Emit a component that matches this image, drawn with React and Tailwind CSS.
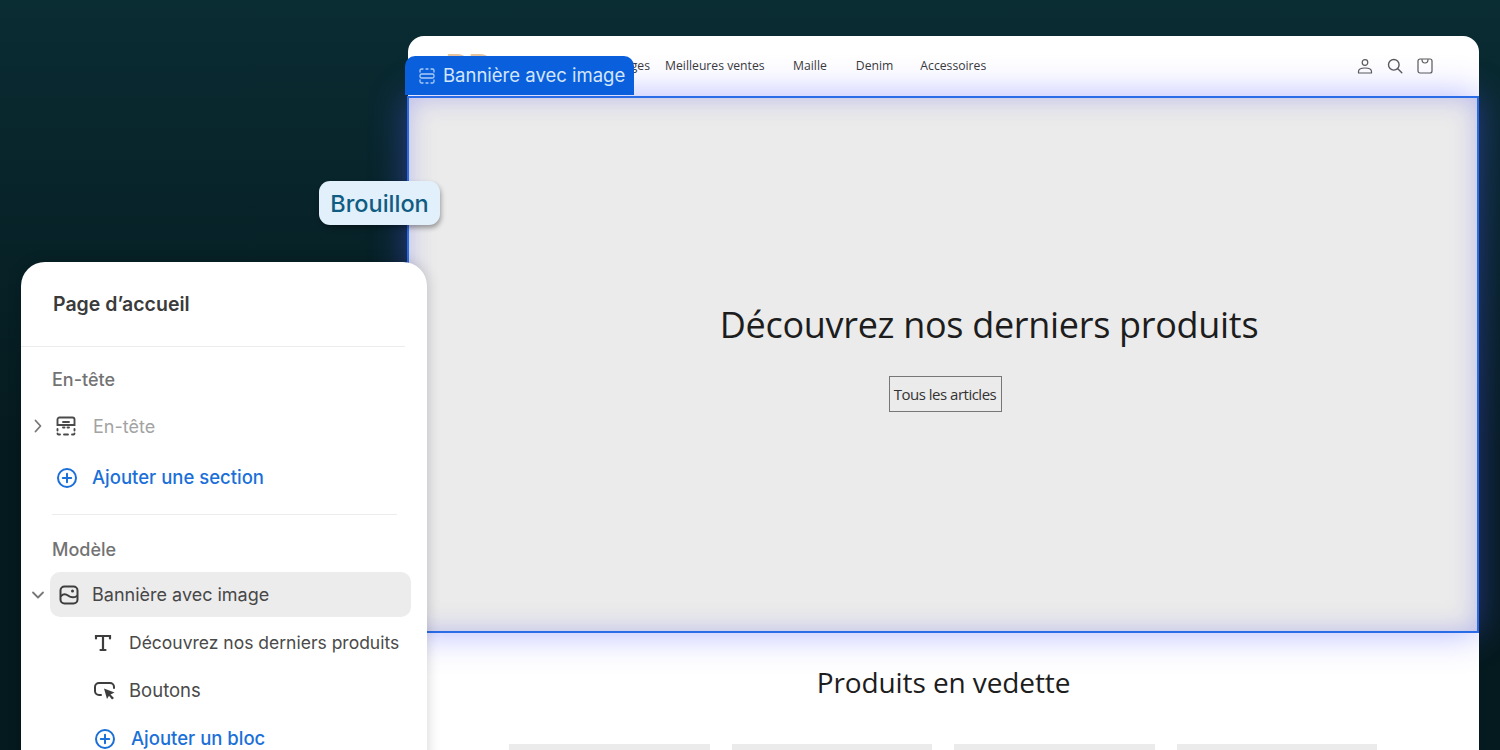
import React from "react";

const Chevron = ({ down }) => (
  <svg width="14" height="14" viewBox="0 0 14 14" fill="none" stroke="#777" strokeWidth="1.8" strokeLinecap="round" strokeLinejoin="round">
    <path d={down ? "M2 4.5 7 9.5 12 4.5" : "M4.5 1.5 9.5 7 4.5 12.5"} />
  </svg>
);

const PlusCircle = () => (
  <svg width="22" height="22" viewBox="0 0 22 22" fill="none" stroke="#1a6fd8" strokeWidth="2" strokeLinecap="round">
    <circle cx="11" cy="11" r="9" />
    <path d="M11 6.8v8.4M6.8 11h8.4" />
  </svg>
);

const HeaderIcon = () => (
  <svg width="20" height="20" viewBox="0 0 20 20" fill="none" stroke="#4a4a4a" strokeWidth="1.9" strokeLinecap="round">
    <path d="M1.5 9V3.5a2 2 0 0 1 2-2h13a2 2 0 0 1 2 2V9z" />
    <path d="M7 6h6" />
    <path d="M1.5 13v1.5M18.5 13v1.5M1.5 17.5a1 1 0 0 0 1 1h1.5M18.5 17.5a1 1 0 0 1-1 1H16M8 18.5h4M7 11.5h1.5M11.5 11.5H13" />
  </svg>
);

const SectionIcon = () => (
  <svg width="16" height="16" viewBox="0 0 16 16" fill="none" stroke="#a9cdf6" strokeWidth="1.3" strokeLinecap="round">
    <path d="M1 4V2.500A1.500 1.500 0 0 1 2.500 1H4M7 1h2M12 1h1.500A1.500 1.500 0 0 1 15 2.500V4" />
    <path d="M1 12v1.500A1.500 1.500 0 0 0 2.500 15H4M7 15h2M12 15h1.500a1.500 1.500 0 0 0 1.500-1.500V12" />
    <rect x="1" y="6" width="14" height="4" rx="1.500" />
  </svg>
);

const ImageIcon = () => (
  <svg width="20" height="20" viewBox="0 0 20 20" fill="none" stroke="#3d3d3d" strokeWidth="2" strokeLinecap="round" strokeLinejoin="round">
    <rect x="1.500" y="1.500" width="17" height="17" rx="4" />
    <path d="M2 11c2.500-2.500 4.500-2.500 7-.5s5 3 9 .5" />
    <circle cx="13.500" cy="6" r="1.500" fill="#3d3d3d" stroke="none" />
  </svg>
);

const TextIcon = () => (
  <svg width="18" height="18" viewBox="0 0 18 18" fill="none" stroke="#3d3d3d" strokeWidth="2.200" strokeLinecap="round">
    <path d="M2 4.500V2h14v2.500M9 2v14M6.500 16h5" />
  </svg>
);

const ButtonIcon = () => (
  <svg width="22" height="18" viewBox="0 0 22 18" fill="none">
    <path d="M7 13H5a4 4 0 0 1-4-4V5a4 4 0 0 1 4-4h11a4 4 0 0 1 4 4v1" stroke="#3d3d3d" strokeWidth="2" strokeLinecap="round" />
    <path d="M10 6.500 20.500 10.500 16.500 12.500 20 16 18 17.500 15 13.800 13 17z" fill="#3d3d3d" />
  </svg>
);

const Tree = ({ icon, children, className, textClass }) => (
  <div className={`flex items-center h-12 ${className}`}>
    <span className="w-[43px] pl-[8px] flex shrink-0">{icon}</span>
    <span className={`text-[#4a4a4a] whitespace-nowrap ${textClass}`}>{children}</span>
  </div>
);

const Sidebar = () => (
  <aside
    className="absolute z-20 left-[21px] top-[262px] w-[406px] h-[520px] bg-white rounded-[24px] shadow-[0_0_14px_rgba(0,0,0,0.18)] font-['Inter',sans-serif]"
  >
    <div className="h-[85px] pl-[32px] pt-[29px] border-b border-[#ececec] mr-[22px]">
      <h2 className="text-[19.500px] leading-[27px] font-semibold text-[#3b3b3b]">Page d’accueil</h2>
    </div>

    <div className="pl-[31px] pt-[21px] text-[18px] leading-[24px] font-medium text-[#737373]">En-tête</div>
    <div className="flex items-center h-[48px] mt-[10px]">
      <span className="w-[35px] pl-[10px] shrink-0"><Chevron /></span>
      <HeaderIcon />
      <span className="ml-[17px] text-[18px] text-[#a3a3a3]">En-tête</span>
    </div>
    <div className="flex items-center h-[44px] mt-[6px] pl-[35px]">
      <PlusCircle />
      <span className="ml-[14px] text-[18.500px] font-medium text-[#1a6fd8]">Ajouter une section</span>
    </div>
    <div className="h-px bg-[#ececec] ml-[31px] mr-[30px] mt-[14px]" />

    <div className="pl-[31px] pt-[23px] text-[18px] leading-[24px] font-medium text-[#737373]">Modèle</div>
    <div className="flex items-center h-[45px] mt-[10px]">
      <span className="w-[29px] pl-[10px] shrink-0"><Chevron down /></span>
      <div className="flex items-center flex-1 h-full mr-[16px] bg-[#ececec] rounded-[10px] pl-[9px]">
        <ImageIcon />
        <span className="ml-[13px] text-[18px] text-[#474747]">Bannière avec image</span>
      </div>
    </div>
    <Tree className="ml-[65px] mt-[2px]" textClass="text-[17.500px]" icon={<TextIcon />}>Découvrez nos derniers produits</Tree>
    <Tree className="ml-[65px]" textClass="text-[18.500px]" icon={<ButtonIcon />}>Boutons</Tree>
    <div className="flex items-center h-12 ml-[73px]">
      <PlusCircle />
      <span className="ml-[15px] text-[18.500px] font-medium text-[#1a6fd8]">Ajouter un bloc</span>
    </div>
  </aside>
);

const NavBar = () => (
  <nav className="h-[60px] flex items-center pl-[37px] pr-[46px] text-[12.200px] text-[#3a3a3a] font-['Open_Sans',sans-serif] font-medium">
    <span className="text-[34px] leading-none font-bold text-[#e6c4a0] w-[72px] -mt-[2px]">BB</span>
    <span className="w-[133px] pt-[1px] text-right whitespace-nowrap">Nouveaux arrivages</span>
    <span className="ml-[15px] pt-[1px] w-[100px] whitespace-nowrap">Meilleures ventes</span>
    <span className="ml-[28px] pt-[1px]">Maille</span>
    <span className="ml-[29px] pt-[1px]">Denim</span>
    <span className="ml-[27px] pt-[1px]">Accessoires</span>
    <div className="ml-auto flex items-center gap-[14px] text-[#5a5a5a]">
      <svg width="16" height="16" viewBox="0 0 16 16" fill="none" stroke="currentColor" strokeWidth="1.200">
        <circle cx="8" cy="4.500" r="2.800" />
        <path d="M1.500 15v-1.500c0-2 2-3.500 6.500-3.500s6.500 1.500 6.500 3.500V15z" strokeLinejoin="round" />
      </svg>
      <svg width="16" height="16" viewBox="0 0 16 16" fill="none" stroke="currentColor" strokeWidth="1.400" strokeLinecap="round">
        <circle cx="6.800" cy="6.800" r="5.300" />
        <path d="m10.800 10.800 4 4" />
      </svg>
      <svg width="16" height="16" viewBox="0 0 16 16" fill="none" stroke="currentColor" strokeWidth="1.200" strokeLinecap="round">
        <path d="M1 3a2 2 0 0 1 2-2h10a2 2 0 0 1 2 2v10a2 2 0 0 1-2 2H3a2 2 0 0 1-2-2z" />
        <path d="M5 1.500c0 2 1 3.500 3 3.500s3-1.500 3-3.500" />
      </svg>
    </div>
  </nav>
);

export default function App() {
  return (
    <div className="relative h-[750px] overflow-hidden pt-[36px] bg-gradient-to-b from-[#0a2c33] to-[#051a1e] to-60% font-['Open_Sans',sans-serif]">
      <div className="relative ml-[408px] w-[1071px] h-[760px] bg-white rounded-t-[16px]">
        <NavBar />

        <section className="relative z-10 h-[537px] -ml-[1px] flex flex-col items-center pt-[202px] bg-[#ebebeb] border-2 border-[#2a6be8] shadow-[0_0_34px_rgba(85,90,255,0.45),inset_0_0_26px_rgba(110,110,235,0.4)]">
          <h1 className="text-[36px] leading-[50px] text-[#1d1d1d] pl-[92px] tracking-[-0.3px] whitespace-nowrap">Découvrez nos derniers produits</h1>
          <button className="mt-[26px] ml-[4px] w-[113px] h-[36px] border-[1.500px] border-[#777] text-[15px] tracking-[-0.5px] text-[#333]">Tous les articles</button>
        </section>

        <h2 className="mt-[30px] text-center text-[28px] leading-[38px] text-[#1d1d1d] tracking-[-0.1px]">Produits en vedette</h2>
        <div className="grid grid-cols-4 gap-[22px] mt-[43px] ml-[101px] mr-[102px]">
          <div className="h-[120px] bg-[#ebebeb]" />
          <div className="h-[120px] bg-[#ebebeb]" />
          <div className="h-[120px] bg-[#ebebeb]" />
          <div className="h-[120px] bg-[#ebebeb]" />
        </div>

        {/* etiquette de section, par dessus la nav */}
        <div className="absolute z-20 -left-[3px] top-[20px] w-[229px] h-[39px] flex items-center pl-[14px] gap-[8px] bg-[#0a5fdc] rounded-t-[10px] font-['Inter',sans-serif] text-[18.500px] text-[#d3e6fb]">
          <SectionIcon />
          <span className="pt-[1px] whitespace-nowrap">Bannière avec image</span>
        </div>
      </div>

      <div className="absolute z-20 left-[319px] top-[181px] w-[121px] h-[44px] pt-[1px] flex items-center justify-center rounded-[11px] bg-[#e2f0fc] text-[23.500px] font-medium text-[#0f5d82] font-['Inter',sans-serif] shadow-[1px_3px_5px_rgba(0,0,0,0.35)]">
        Brouillon
      </div>

      <Sidebar />
    </div>
  );
}
